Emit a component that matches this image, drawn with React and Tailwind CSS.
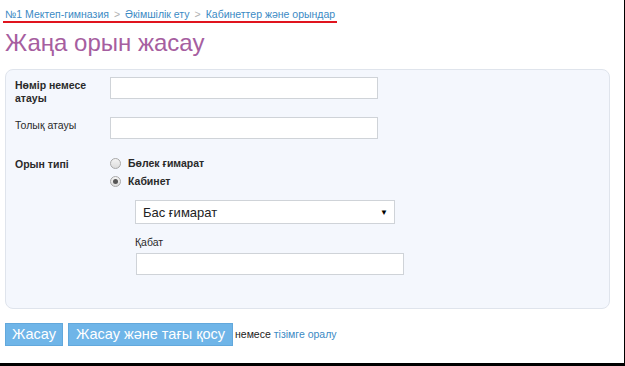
export default function App() {
  const font = { fontFamily: '"Liberation Sans", Arial, sans-serif' };
  return (
    <div className="w-[625px] h-[366px] bg-white overflow-hidden" style={font}>
      <div className="w-[625px] h-[366px] border-r border-b-[3px] border-black bg-white flex flex-col">
        <div className="pl-[3px] pt-[8px] flex">
          <div className="flex items-center gap-[5px] px-[2px] pb-[1px] border-b-2 border-[#e0141e] text-[10.5px] leading-[12px]">
            <span className="text-[#3b8ac4]">№1 Мектеп-гимназия</span>
            <span className="text-[#b0b0b0]">&gt;</span>
            <span className="text-[#3b8ac4]">Әкімшілік ету</span>
            <span className="text-[#b0b0b0]">&gt;</span>
            <span className="text-[#3b8ac4]">Кабинеттер және орындар</span>
          </div>
        </div>
        <h1 className="pl-[5px] mt-[6px] text-[24px] leading-[28px] text-[#a65ea0]">Жаңа орын жасау</h1>
        <div className="ml-[5px] mt-[12px] w-[605px] h-[240px] rounded-[8px] border border-[#dfe4ec] bg-[#f4f7fd] pl-[9px] pt-[7px] text-[10.5px] leading-[13px] text-[#2a2a2a]">
          <div className="flex">
            <div className="w-[95px] pt-[2px] font-bold">Нөмір немесе<br />атауы</div>
            <div className="w-[268px] h-[22px] bg-white border border-[#cfd3d8]" />
          </div>
          <div className="flex mt-[12px]">
            <div className="w-[95px] pt-[2px]">Толық атауы</div>
            <div className="w-[268px] h-[22px] bg-white border border-[#cfd3d8]" />
          </div>
          <div className="flex mt-[16px]">
            <div className="w-[95px] pt-[3px] font-bold">Орын типі</div>
            <div className="flex flex-col gap-[5px] pt-[2px]">
              <div className="flex items-center gap-[7px]">
                <span className="w-[11px] h-[11px] rounded-full border border-[#a8a8a8] bg-gradient-to-b from-[#f4f4f4] to-[#dcdcdc]" />
                <span className="font-bold">Бөлек ғимарат</span>
              </div>
              <div className="flex items-center gap-[7px]">
                <span className="w-[11px] h-[11px] rounded-full border border-[#a8a8a8] bg-gradient-to-b from-[#f4f4f4] to-[#dcdcdc] flex items-center justify-center">
                  <span className="w-[5px] h-[5px] rounded-full bg-[#555]" />
                </span>
                <span className="font-bold">Кабинет</span>
              </div>
            </div>
          </div>
          <div className="ml-[120px] mt-[12px] w-[260px] h-[24px] bg-white border border-[#cfd3d8] flex items-center justify-between pl-[7px] pr-[6px]">
            <span className="text-[13px] text-[#222]">Бас ғимарат</span>
            <span className="text-[8px] text-black">▼</span>
          </div>
          <div className="ml-[120px] mt-[12px]">Қабат</div>
          <div className="ml-[121px] mt-[4px] w-[268px] h-[22px] bg-white border border-[#cfd3d8]" />
        </div>
        <div className="flex items-center mt-[14px] pl-[5px]">
          <div className="h-[23px] w-[58px] flex items-center justify-center bg-[#6fb5e8] border border-[#62a8dc] text-white text-[14.5px] whitespace-nowrap">Жасау</div>
          <div className="h-[23px] w-[165px] ml-[5px] flex items-center justify-center bg-[#6fb5e8] border border-[#62a8dc] text-white text-[14.5px] whitespace-nowrap">Жасау және тағы қосу</div>
          <span className="ml-[2px] text-[10.5px] text-[#222]">немесе</span>
          <span className="ml-[3px] text-[10.5px] text-[#3b8ac4]">тізімге оралу</span>
        </div>
      </div>
    </div>
  );
}
